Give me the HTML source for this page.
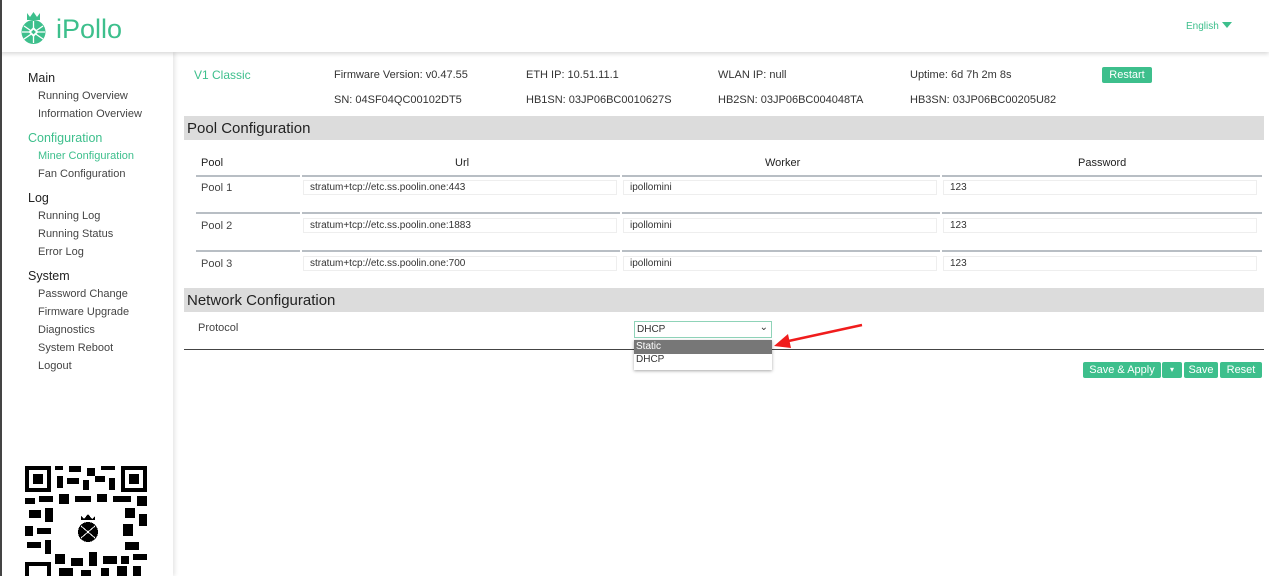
<!DOCTYPE html>
<html><head><meta charset="utf-8"><style>
*{margin:0;padding:0;box-sizing:border-box}
body{width:1269px;height:576px;overflow:hidden;background:#fff;font-family:"Liberation Sans",sans-serif;color:#333;position:relative}
.a{position:absolute;white-space:nowrap}
.hdr{position:absolute;left:0;top:0;width:1269px;height:52px;background:#fff;box-shadow:0 2px 4px rgba(0,0,0,.15);z-index:2}
.side{position:absolute;left:0;top:52px;width:173px;height:524px;background:#fff;box-shadow:2px 0 4px rgba(0,0,0,.1)}
.s{font-size:11px;color:#444}
.h{font-size:12.5px;color:#222}
.g,.h.g,.s.g{color:#3dbf8c}
.bar{position:absolute;left:184px;width:1080px;height:24px;background:#dcdcdc;font-size:15px;color:#222;padding:4px 3px}
.inp{position:absolute;height:15px;border:1px solid #eee;font-size:10px;padding:1px 6px;color:#333}
.btn{position:absolute;background:#3dbf8c;color:#fff;font-size:11px;border-radius:2px;text-align:center;line-height:16px;height:16px}
.ln{position:absolute;height:2px;background:#b8bec4}
</style></head><body>
<div class="hdr">
<svg class="a" style="left:20px;top:11px" width="27" height="34" viewBox="0 0 27 34"><path d="M7 2l3 4 3.5-5 3.5 5 3-4v7H7z" fill="#3dbf8c"/><circle cx="13.5" cy="21" r="12" fill="#3dbf8c"/><path d="M4 15l19 13M23 15L4 28M13.5 10v22M2 21h23" stroke="#fff" stroke-width="1.3"/><rect x="10" y="17.5" width="7" height="7" transform="rotate(45 13.5 21)" fill="#fff"/><rect x="11.8" y="19.3" width="3.4" height="3.4" transform="rotate(45 13.5 21)" fill="#3dbf8c"/></svg>
<div class="a g" style="left:56px;top:14px;font-size:27px">iPollo</div>
<div class="a g" style="left:1186px;top:21px;font-size:10px">English <span style="display:inline-block;border:5px solid transparent;border-top:6px solid #3dbf8c;border-bottom:0;vertical-align:1px"></span></div>
</div>
<div class="side">
<div class="a h" style="left:28px;top:19px">Main</div>
<div class="a s" style="left:38px;top:38px">Running Overview</div>
<div class="a s" style="left:38px;top:56px">Information Overview</div>
<div class="a h g" style="left:28px;top:79px">Configuration</div>
<div class="a s g" style="left:38px;top:98px">Miner Configuration</div>
<div class="a s" style="left:38px;top:116px">Fan Configuration</div>
<div class="a h" style="left:28px;top:139px">Log</div>
<div class="a s" style="left:38px;top:158px">Running Log</div>
<div class="a s" style="left:38px;top:176px">Running Status</div>
<div class="a s" style="left:38px;top:194px">Error Log</div>
<div class="a h" style="left:28px;top:217px">System</div>
<div class="a s" style="left:38px;top:236px">Password Change</div>
<div class="a s" style="left:38px;top:254px">Firmware Upgrade</div>
<div class="a s" style="left:38px;top:272px">Diagnostics</div>
<div class="a s" style="left:38px;top:290px">System Reboot</div>
<div class="a s" style="left:38px;top:308px">Logout</div>
<svg class="a" style="left:25px;top:414px" width="122" height="110" viewBox="0 0 122 110" shape-rendering="crispEdges">
<g fill="#000"><rect x="0" y="0" width="26" height="26"/><rect x="96" y="0" width="26" height="26"/><rect x="0" y="96" width="26" height="14"/></g>
<g fill="#fff"><rect x="4" y="4" width="18" height="18"/><rect x="100" y="4" width="18" height="18"/><rect x="4" y="100" width="18" height="10"/></g>
<g fill="#000"><rect x="8" y="8" width="10" height="10"/><rect x="104" y="8" width="10" height="10"/>
<rect x="30" y="0" width="8" height="4"/><rect x="44" y="0" width="12" height="6"/><rect x="62" y="2" width="8" height="8"/><rect x="76" y="0" width="14" height="4"/><rect x="32" y="10" width="6" height="12"/><rect x="42" y="12" width="12" height="6"/><rect x="58" y="14" width="6" height="10"/><rect x="70" y="10" width="10" height="6"/><rect x="84" y="12" width="6" height="12"/>
<rect x="0" y="32" width="10" height="6"/><rect x="14" y="30" width="14" height="6"/><rect x="34" y="28" width="10" height="10"/><rect x="50" y="30" width="16" height="6"/><rect x="72" y="28" width="10" height="8"/><rect x="88" y="30" width="18" height="6"/><rect x="112" y="30" width="10" height="10"/>
<rect x="4" y="44" width="12" height="8"/><rect x="20" y="42" width="8" height="14"/><rect x="100" y="42" width="10" height="10"/><rect x="114" y="48" width="8" height="12"/><rect x="0" y="60" width="8" height="10"/><rect x="12" y="62" width="14" height="6"/><rect x="98" y="58" width="10" height="12"/>
<rect x="2" y="76" width="14" height="6"/><rect x="20" y="74" width="6" height="14"/><rect x="100" y="76" width="14" height="8"/><rect x="30" y="88" width="10" height="10"/><rect x="46" y="92" width="12" height="8"/><rect x="64" y="86" width="8" height="14"/><rect x="78" y="90" width="14" height="8"/><rect x="96" y="90" width="8" height="8"/><rect x="108" y="88" width="14" height="6"/><rect x="34" y="102" width="14" height="8"/><rect x="56" y="104" width="10" height="6"/><rect x="76" y="102" width="8" height="8"/><rect x="92" y="100" width="10" height="10"/><rect x="108" y="100" width="8" height="10"/></g>
<rect x="40" y="40" width="48" height="46" rx="4" fill="#fff"/>
<path d="M56 50l3 3 4-5 4 5 3-3v4H56z" fill="#000"/><circle cx="63" cy="66" r="10" fill="#000"/><path d="M56 60l14 12M70 60L56 72" stroke="#fff" stroke-width="1"/>
</svg>
</div>
<div class="a" style="left:0;top:0;width:2px;height:576px;background:#444;z-index:3"></div>

<div class="a g" style="left:194px;top:68px;font-size:12px">V1 Classic</div>
<div class="a" style="left:334px;top:69px;font-size:11px">Firmware Version: v0.47.55</div>
<div class="a" style="left:526px;top:69px;font-size:11px">ETH IP: 10.51.11.1</div>
<div class="a" style="left:718px;top:69px;font-size:11px">WLAN IP: null</div>
<div class="a" style="left:910px;top:69px;font-size:11px">Uptime: 6d 7h 2m 8s</div>
<div class="btn" style="left:1102px;top:67px;width:50px">Restart</div>
<div class="a" style="left:334px;top:94px;font-size:11px">SN: 04SF04QC00102DT5</div>
<div class="a" style="left:526px;top:94px;font-size:11px">HB1SN: 03JP06BC0010627S</div>
<div class="a" style="left:718px;top:94px;font-size:11px">HB2SN: 03JP06BC004048TA</div>
<div class="a" style="left:910px;top:94px;font-size:11px">HB3SN: 03JP06BC00205U82</div>

<div class="bar" style="top:116px">Pool Configuration</div>
<div class="a" style="left:201px;top:157px;font-size:11px;color:#222">Pool</div>
<div class="a" style="left:455px;top:157px;font-size:11px;color:#222">Url</div>
<div class="a" style="left:765px;top:157px;font-size:11px;color:#222">Worker</div>
<div class="a" style="left:1078px;top:157px;font-size:11px;color:#222">Password</div>

<div class="ln" style="left:196px;top:175px;width:104px"></div><div class="ln" style="left:302px;top:175px;width:318px"></div><div class="ln" style="left:622px;top:175px;width:318px"></div><div class="ln" style="left:942px;top:175px;width:320px"></div>
<div class="a s" style="left:201px;top:182px">Pool 1</div>
<div class="inp" style="left:303px;top:180px;width:314px">stratum+tcp://etc.ss.poolin.one:443</div>
<div class="inp" style="left:623px;top:180px;width:314px">ipollomini</div>
<div class="inp" style="left:943px;top:180px;width:314px">123</div>

<div class="ln" style="left:196px;top:212px;width:104px"></div><div class="ln" style="left:302px;top:212px;width:318px"></div><div class="ln" style="left:622px;top:212px;width:318px"></div><div class="ln" style="left:942px;top:212px;width:320px"></div>
<div class="a s" style="left:201px;top:220px">Pool 2</div>
<div class="inp" style="left:303px;top:218px;width:314px">stratum+tcp://etc.ss.poolin.one:1883</div>
<div class="inp" style="left:623px;top:218px;width:314px">ipollomini</div>
<div class="inp" style="left:943px;top:218px;width:314px">123</div>

<div class="ln" style="left:196px;top:250px;width:104px"></div><div class="ln" style="left:302px;top:250px;width:318px"></div><div class="ln" style="left:622px;top:250px;width:318px"></div><div class="ln" style="left:942px;top:250px;width:320px"></div>
<div class="a s" style="left:201px;top:258px">Pool 3</div>
<div class="inp" style="left:303px;top:256px;width:314px">stratum+tcp://etc.ss.poolin.one:700</div>
<div class="inp" style="left:623px;top:256px;width:314px">ipollomini</div>
<div class="inp" style="left:943px;top:256px;width:314px">123</div>

<div class="bar" style="top:288px">Network Configuration</div>
<div class="a s" style="left:198px;top:322px">Protocol</div>
<div class="a" style="left:634px;top:321px;width:138px;height:17px;border:1px solid #8fd3b8;font-size:10px;padding:2px 2px">DHCP<span style="position:absolute;right:3px;top:0;font-size:10px">&#8964;</span></div>
<div class="a" style="left:184px;top:349px;width:1080px;height:1px;background:#444"></div>
<div class="a" style="left:634px;top:340px;width:138px;height:30px;background:#fff;box-shadow:0 1px 3px rgba(0,0,0,.35);font-size:10px">
<div style="background:#777;color:#fff;height:14px;padding:1px 2px">Static</div><div style="padding:0 2px;color:#333">DHCP</div></div>
<svg class="a" style="left:770px;top:320px" width="100" height="32"><path d="M92 5L14 22" stroke="#f01c1c" stroke-width="2.5"/><path d="M4 26L18 14 21 28z" fill="#f01c1c"/></svg>

<div class="btn" style="left:1083px;top:362px;width:78px">Save &amp; Apply</div>
<div class="btn" style="left:1162px;top:362px;width:20px;font-size:8px">▾</div>
<div class="btn" style="left:1184px;top:362px;width:34px">Save</div>
<div class="btn" style="left:1220px;top:362px;width:42px">Reset</div>
</body></html>
